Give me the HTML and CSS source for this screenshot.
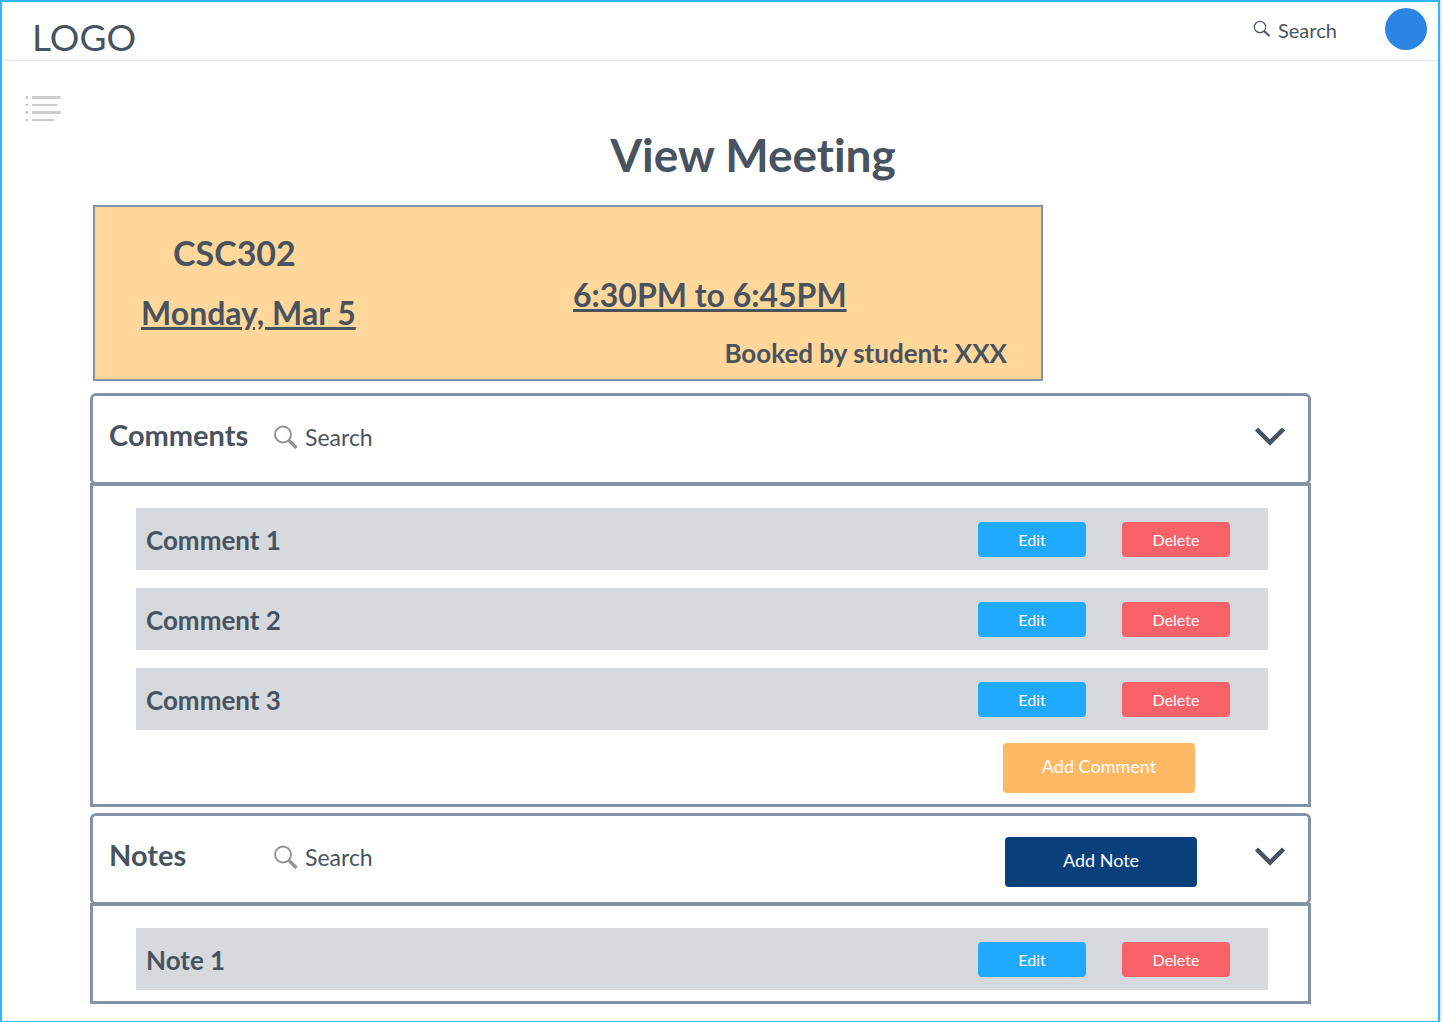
FILE: index.html
```html
<!DOCTYPE html>
<html lang="en">
<head>
<meta charset="utf-8">
<meta name="viewport" content="width=device-width, initial-scale=1">
<title>View Meeting</title>
<link rel="stylesheet" href="styles.css">
</head>
<body>
<div class="page">
  <header class="topbar">
    <a class="logo" href="#">LOGO</a>
    <label class="search search-top">
      <svg width="18" height="18" viewBox="0 0 18 18" fill="none" stroke="currentColor" aria-hidden="true">
        <circle cx="7" cy="7" r="5.7" stroke-width="1.2"/>
        <path d="M11 11l5.500 5" stroke-width="2"/>
      </svg>
      <input type="text" placeholder="Search" aria-label="Search">
    </label>
    <a class="avatar" href="#" aria-label="Account"></a>
  </header>

  <div class="heading">
    <button class="menu" type="button" aria-label="Menu">
      <svg width="36" height="26" viewBox="0 0 36 26" fill="#cbcbcb" aria-hidden="true">
        <path d="M0.500 0H3V3H0.500zM0.500 8H3V10H0.500zM0.500 15H3V18H0.500zM0.500 23H3V25H0.500zM7 0H35.500V3H7zM7 8H32V10H7zM7 15H35.500V18H7zM7 23H29V25H7z"/>
      </svg>
    </button>
    <h1>View Meeting</h1>
  </div>

  <main>
    <section class="meeting">
      <div class="meeting-day">
        <h2>CSC302</h2>
        <p class="when">Monday, Mar 5</p>
      </div>
      <div class="meeting-slot">
        <p class="when">6:30PM to 6:45PM</p>
        <p class="booked">Booked by student: XXX</p>
      </div>
    </section>

    <section class="panel">
      <div class="panel-head">
        <h2>Comments</h2>
        <label class="search">
          <svg width="24" height="24" viewBox="0 0 24 24" fill="none" stroke="#919191" aria-hidden="true">
            <circle cx="9" cy="9.500" r="8" stroke-width="1.900"/>
            <path d="M15 15.500l7.500 7.500" stroke-width="3.200"/>
          </svg>
          <input type="text" placeholder="Search" aria-label="Search comments">
        </label>
        <button class="toggle" type="button" aria-label="Toggle comments">
          <svg width="30" height="20" viewBox="0 0 30 20" fill="none" stroke="currentColor" stroke-width="4.500" aria-hidden="true"><path d="M1.500 2L15 15.500L28.500 2"/></svg>
        </button>
      </div>
      <div class="panel-body">
        <ul class="entries">
          <li><h3>Comment 1</h3><button class="btn edit" type="button">Edit</button><button class="btn delete" type="button">Delete</button></li>
          <li><h3>Comment 2</h3><button class="btn edit" type="button">Edit</button><button class="btn delete" type="button">Delete</button></li>
          <li><h3>Comment 3</h3><button class="btn edit" type="button">Edit</button><button class="btn delete" type="button">Delete</button></li>
        </ul>
        <button class="btn add add-comment" type="button">Add Comment</button>
      </div>
    </section>

    <section class="panel">
      <div class="panel-head">
        <h2>Notes</h2>
        <label class="search">
          <svg width="24" height="24" viewBox="0 0 24 24" fill="none" stroke="#919191" aria-hidden="true">
            <circle cx="9" cy="9.500" r="8" stroke-width="1.900"/>
            <path d="M15 15.500l7.500 7.500" stroke-width="3.200"/>
          </svg>
          <input type="text" placeholder="Search" aria-label="Search notes">
        </label>
        <button class="btn add add-note" type="button">Add Note</button>
        <button class="toggle" type="button" aria-label="Toggle notes">
          <svg width="30" height="20" viewBox="0 0 30 20" fill="none" stroke="currentColor" stroke-width="4.500" aria-hidden="true"><path d="M1.500 2L15 15.500L28.500 2"/></svg>
        </button>
      </div>
      <div class="panel-body">
        <ul class="entries">
          <li><h3>Note 1</h3><button class="btn edit" type="button">Edit</button><button class="btn delete" type="button">Delete</button></li>
        </ul>
      </div>
    </section>
  </main>
</div>
</body>
</html>
```
FILE: styles.css
```css
* {
  box-sizing: border-box;
}

body {
  margin: 0;
  background: #e6e9f2;
  color: #48535f;
  font-family: Lato, "Liberation Sans", sans-serif;
  font-variant-ligatures: none;
}

h1, h2, h3, p, ul {
  margin: 0;
  padding: 0;
}

button {
  border: 0;
  padding: 0;
  background: none;
  color: inherit;
  font-family: inherit;
  cursor: pointer;
}

svg {
  display: block;
  flex: none;
}

.page {
  min-height: 100vh;
  margin-right: 2px;
  border: 2px solid #31b5fb;
  border-bottom-width: 1px;
  background: #fff;
}

/* Top bar */
.topbar {
  display: flex;
  align-items: center;
  height: 59px;
  padding: 0 11px 4px 30px;
  border-bottom: 1px solid #e3e7f0;
}

.logo {
  margin-right: auto;
  padding-top: 16px;
  color: inherit;
  font-size: 37px;
  line-height: 40px;
  text-decoration: none;
}

.search {
  display: flex;
  align-items: center;
  gap: 7px;
}

.search input {
  width: 81px;
  padding: 0;
  border: 0;
  outline: 0;
  background: none;
  color: inherit;
  font: 23px/28px Lato, sans-serif;
}

.search input::placeholder {
  color: inherit;
  opacity: 1;
}

.search-top input {
  padding-top: 2px;
  font-size: 20px;
}

.avatar {
  width: 42px;
  height: 42px;
  margin-left: 26px;
  border-radius: 50%;
  background: #2b85e4;
}

/* Title row */
.heading {
  display: flex;
  align-items: flex-start;
  gap: 7px;
  padding: 35px 0 0 23px;
}

h1 {
  flex: 1;
  padding-top: 29px;
  font-size: 46px;
  line-height: 60px;
  text-align: center;
}

main {
  padding: 20px 127px 17px 88px;
}

/* Meeting summary */
.meeting {
  display: flex;
  justify-content: space-between;
  max-width: 950px;
  min-height: 176px;
  margin: 0 0 12px 3px;
  padding: 24px 34px 8px 46px;
  border: 2px solid #8492a6;
  background: #ffd79b;
}

.meeting h2 {
  padding-left: 32px;
  font-size: 34px;
  line-height: 44px;
}

.when {
  font-size: 32px;
  line-height: 40px;
  text-decoration: underline;
}

.meeting-day .when {
  margin-top: 18px;
}

.meeting-slot {
  display: flex;
  flex-direction: column;
  gap: 22px;
  width: 434px;
  padding-top: 44px;
}

.booked {
  font-size: 26px;
  line-height: 32px;
  text-align: right;
}

.when,
.booked {
  font-weight: 700;
}

/* Collapsible panels */
.panel + .panel {
  margin-top: 6px;
}

.panel-head {
  display: flex;
  align-items: center;
  height: 92px;
  padding: 0 23px 5px 16px;
  border: 3px solid #8492a6;
  border-radius: 6px;
}

.panel-head h2 {
  width: 165px;
  padding-bottom: 4px;
  font-size: 29px;
  line-height: 36px;
}

.toggle {
  margin-left: auto;
}

.panel-body {
  display: flex;
  flex-direction: column;
  gap: 13px;
  margin-top: -2px;
  padding: 22px 40px 11px 43px;
  border: 3px solid #8492a6;
}

.entries {
  display: grid;
  gap: 18px;
  list-style: none;
}

.entries li {
  display: flex;
  align-items: center;
  gap: 36px;
  height: 62px;
  padding: 0 38px 0 10px;
  background: #d6dadf;
}

.entries h3 {
  flex: 1;
  padding-top: 2px;
  font-size: 26px;
  line-height: 32px;
}

.btn {
  border-radius: 4px;
  color: #fff;
}

.edit,
.delete {
  width: 108px;
  height: 35px;
  font-size: 16px;
}

.edit {
  background: #1fa9ff;
}

.delete {
  background: #f96268;
}

.add {
  width: 192px;
  height: 50px;
  padding-bottom: 4px;
  font-size: 18px;
}

.add-comment {
  align-self: flex-end;
  margin-right: 73px;
  background: #ffb965;
}

.add-note {
  margin: 11px 0 0 auto;
  background: #093f7b;
}

.add-note + .toggle {
  margin-left: 58px;
}
```
